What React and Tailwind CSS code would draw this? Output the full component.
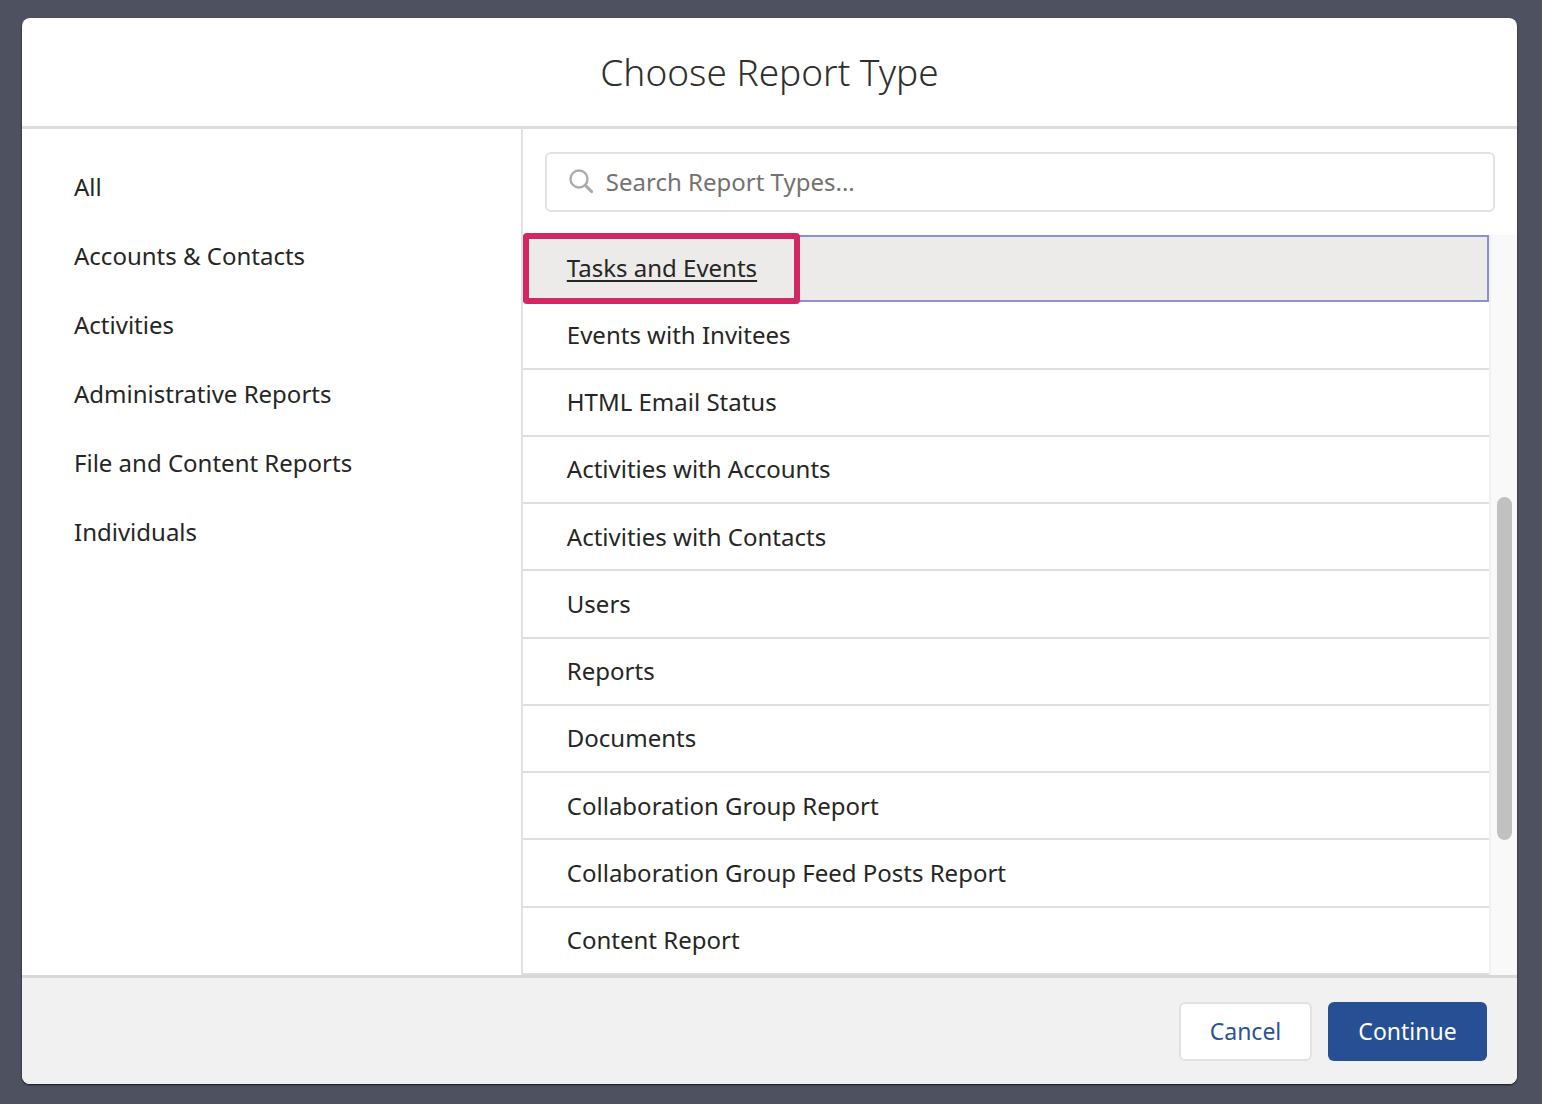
import { useState } from "react";

const categories = [
  "All",
  "Accounts & Contacts",
  "Activities",
  "Administrative Reports",
  "File and Content Reports",
  "Individuals",
];

const reportTypes = [
  "Tasks and Events",
  "Events with Invitees",
  "HTML Email Status",
  "Activities with Accounts",
  "Activities with Contacts",
  "Users",
  "Reports",
  "Documents",
  "Collaboration Group Report",
  "Collaboration Group Feed Posts Report",
  "Content Report",
];

function SearchField() {
  return (
    <div className="py-[23px] pr-[22px] pl-[22px]">
      <label className="flex h-[60px] items-center gap-3 rounded-md border-2 border-[#e3e2e1] bg-white pr-5 pb-0.5 pl-[21px]">
        <svg viewBox="0 0 26 26" className="size-[26px] shrink-0" fill="none" stroke="#aeacab" aria-hidden="true">
          <circle cx="11" cy="11" r="8.5" strokeWidth="2.4" />
          <path d="M17.4 17.4 L23.6 23.6" strokeWidth="3" strokeLinecap="round" />
        </svg>
        <input
          type="text"
          aria-label="Search report types"
          placeholder="Search Report Types..."
          className="h-full min-w-0 flex-1 bg-transparent text-[#3e3e3c] outline-none placeholder:text-[#747270]"
        />
      </label>
    </div>
  );
}

function ReportRow({ name, selected, onSelect }) {
  return (
    <li className={selected ? "relative z-10 min-h-0 flex-1" : "min-h-0 flex-1"}>
      <button
        type="button"
        onClick={onSelect}
        className={
          selected
            ? "flex size-full items-center border-2 border-[#8a91c6] bg-[#ecebea] pb-0.5 pl-[42px] text-left underline decoration-2 underline-offset-3 outline-none"
            : "flex size-full items-center border-b-2 border-[#dfdedd] bg-white pl-11 text-left outline-none"
        }
      >
        {name}
      </button>
      {selected && (
        <span className="pointer-events-none absolute -inset-y-0.5 left-0 w-[277px] rounded border-6 border-[#d12765]" />
      )}
    </li>
  );
}

export default function App() {
  const [selected, setSelected] = useState(reportTypes[0]);

  return (
    <div className="h-screen min-h-[900px] bg-[#4e515f] pt-[18px] pr-[25px] pb-5 pl-[22px] font-['Noto_Sans',sans-serif] text-2xl text-[#262624]">
      <div
        role="dialog"
        aria-labelledby="dialog-title"
        className="flex h-full flex-col overflow-hidden rounded-lg bg-white shadow-[0_1px_2px_#15161f]"
      >
        <header className="flex h-[111px] shrink-0 items-center justify-center border-b-3 border-[#dddddc]">
          <h1 id="dialog-title" className="text-[37px] font-light text-[#2f2f2e]">
            Choose Report Type
          </h1>
        </header>

        <div className="flex min-h-0 flex-1">
          <nav aria-label="Report categories" className="w-[33.5%] border-r-2 border-[#e2e1e1] pt-[23px]">
            <ul>
              {categories.map((name) => (
                <li key={name}>
                  <button type="button" className="flex h-[69px] w-full items-center pl-[52px] text-left">
                    {name}
                  </button>
                </li>
              ))}
            </ul>
          </nav>

          <section className="flex min-w-0 flex-1 flex-col">
            <SearchField />
            <div className="flex min-h-0 flex-1">
              <ul className="flex min-w-0 flex-1 flex-col">
                {reportTypes.map((name) => (
                  <ReportRow
                    key={name}
                    name={name}
                    selected={name === selected}
                    onSelect={() => setSelected(name)}
                  />
                ))}
              </ul>
              <div className="flex w-7 flex-col items-center border-l-2 border-[#f0f0f0] bg-[#f9f9f9]">
                <div className="flex-[262]" />
                <div className="w-[15px] flex-[344] rounded-full bg-[#c1c1c1]" />
                <div className="flex-[135]" />
              </div>
            </div>
          </section>
        </div>

        <footer className="flex h-[109px] shrink-0 items-center justify-end gap-4 border-t-3 border-[#d9d8d8] bg-[#f1f1f1] pr-[30px] text-[23px]">
          <button
            type="button"
            className="h-[59px] w-[133px] rounded-md border-2 border-[#e3e2e2] bg-white text-[#2c5393]"
          >
            Cancel
          </button>
          <button type="button" className="h-[59px] w-[159px] rounded-md bg-[#264f94] text-white">
            Continue
          </button>
        </footer>
      </div>
    </div>
  );
}
